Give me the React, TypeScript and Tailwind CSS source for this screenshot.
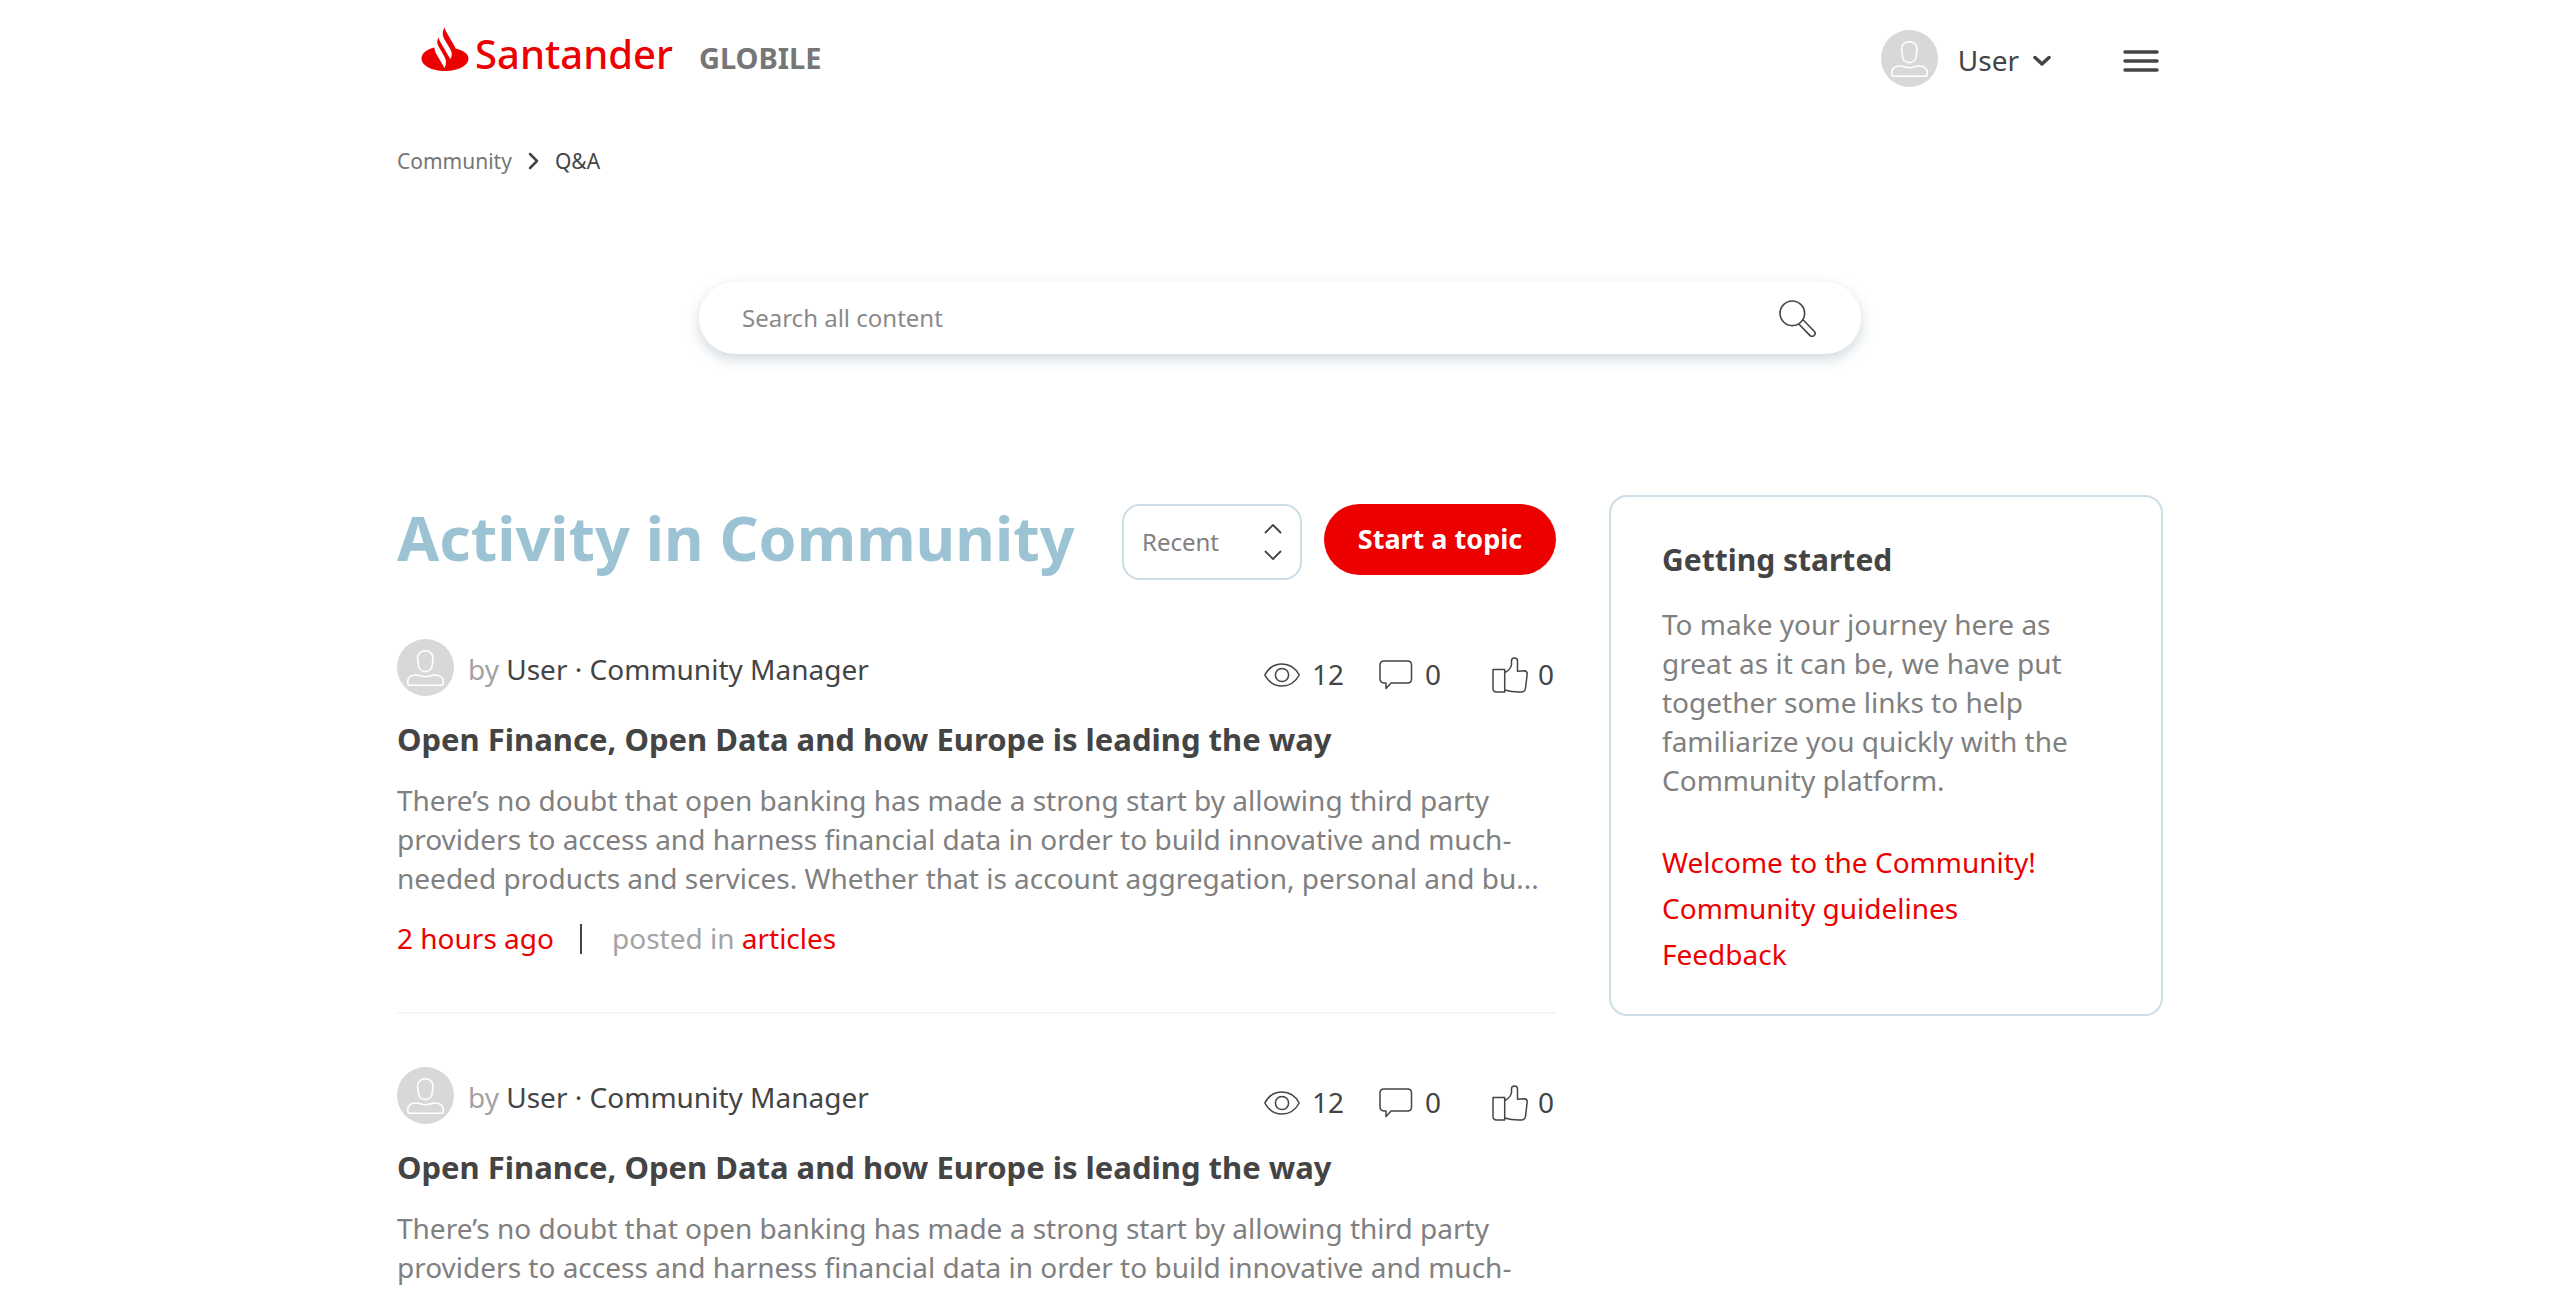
import { useState } from "react";
import { clsx } from "clsx";

type Topic = {
  id: number;
  author: string;
  role: string;
  title: string;
  excerpt: string;
  time: string;
  category: string;
  views: number;
  comments: number;
  likes: number;
};

const openFinance = {
  author: "User",
  role: "Community Manager",
  title: "Open Finance, Open Data and how Europe is leading the way",
  excerpt:
    "There’s no doubt that open banking has made a strong start by allowing third party providers to access and harness financial data in order to build innovative and much-needed products and services. Whether that is account aggregation, personal and bu...",
  time: "2 hours ago",
  category: "articles",
  views: 12,
  comments: 0,
  likes: 0,
};

const topics: Topic[] = [
  { id: 1, ...openFinance },
  { id: 2, ...openFinance },
];

const helpLinks = [
  "Welcome to the Community!",
  "Community guidelines",
  "Feedback",
];

function FlameLogo() {
  return (
    <svg viewBox="0 0 48 44" className="h-11 w-12 fill-[#ec0000]" aria-hidden>
      <path d="M34.5 21.5C42.5 23.2 47.5 27 47.5 31.5C47.5 38.5 37 44 24 44S.5 38.5.5 31.5C.5 26.5 5.5 22.3 13.5 20.5C13.6 23.2 14.2 25 15.4 27L21.5 37.5C22.4 39 23 40 23.3 41.2C25.6 37.2 25.6 33.3 23.3 29.4L17.5 19.3C15.8 16.3 15.9 13.2 17.6 10.3C17.8 12 18.3 13.3 19.2 14.8L27.5 29C28.4 30.5 29 31.2 29.3 32.2C31.4 28.6 31.3 25.8 29.3 22.3L23 11.4C21.1 7.8 21.3 3.8 23.7.3C23.9 2 24.3 3.2 25.2 4.8L33 18.2C33.8 19.5 34.3 20.3 34.5 21.5Z" />
    </svg>
  );
}

function Avatar() {
  return (
    <svg viewBox="0 0 57 57" className="size-[57px] shrink-0" aria-hidden>
      <circle cx="28.5" cy="28.5" r="28.5" fill="#d8d8d8" />
      <g fill="none" stroke="#fff" strokeWidth="1.6">
        <path d="M28.3 11.7C33 11.7 36.2 15 36 19.5L35.2 26C34.8 30 32.2 32.6 28.3 32.6S21.8 30 21.4 26L20.6 19.5C20.4 15 23.6 11.7 28.3 11.7Z" />
        <path d="M18.5 36C21.5 35.6 24.5 37.8 28.5 37.8S35.5 35.6 38.5 36C43.5 36.3 46.3 38.8 46.3 43V44C46.3 45.5 45.5 46.3 44 46.3H13C11.5 46.3 10.7 45.5 10.7 44V43C10.7 38.8 13.5 36.3 18.5 36Z" />
      </g>
    </svg>
  );
}

function EyeIcon() {
  return (
    <svg viewBox="0 0 36 24" className="h-6 w-9" fill="none" stroke="#444" strokeWidth="1.5" aria-hidden>
      <path d="M.8 12C4.5 5 10.5 1 18 1S31.5 5 35.2 12C31.5 19 25.5 23 18 23S4.500 19 .8 12Z" strokeLinejoin="round" />
      <circle cx="18" cy="12" r="6.6" />
    </svg>
  );
}

function CommentIcon() {
  return (
    <svg viewBox="0 0 34 30" className="h-[30px] w-[34px]" fill="none" stroke="#444" strokeWidth="1.5" aria-hidden>
      <path
        d="M5 1H28.5Q32.5 1 32.5 5V19Q32.5 23 28.5 23H12L7 28.5V23H5Q1 22.5 1 19V5Q1 1 5 1Z"
        strokeLinejoin="round"
      />
    </svg>
  );
}

function LikeIcon() {
  return (
    <svg viewBox="0 0 36 36" className="size-9" fill="none" stroke="#444" strokeWidth="1.5" strokeLinejoin="round" aria-hidden>
      <path d="M1 12.5H12.700V35H4.500Q1 34.8 1 31.5Z" />
      <path d="M12.7 15.5C16 14 19 10.5 19.5 7.5V4C19.5 2 20.8 1 22.5 1S25.5 2 25.5 4V14.2L32.5 13.7Q35.3 14 35.2 17L33.5 31.2C33 34 31.8 35 29.5 35C23 35.2 18 34.8 12.7 33" />
    </svg>
  );
}

function SearchIcon() {
  return (
    <svg viewBox="0 0 37 37" className="size-[37px]" fill="none" stroke="#444" strokeWidth="1.6" aria-hidden>
      <circle cx="13.3" cy="13.3" r="12.3" />
      <path d="M24 19.8L35.2 31.2A3 3 0 0 1 30.800 35.4L19.8 24" strokeLinejoin="round" />
    </svg>
  );
}

function Header() {
  return (
    <header className="flex items-center justify-between pt-[27px] pr-1 pl-6">
      <a href="#home" className="flex items-start gap-[6px] self-start">
        <FlameLogo />
        <span className="flex items-baseline gap-[26px]">
          <span className="text-[40px] leading-[54px] font-medium text-[#ec0000]">
            Santander
          </span>
          <span className="text-[29px] font-bold text-[#767676]">GLOBILE</span>
        </span>
      </a>

      <div className="flex h-[63px] items-center">
        <Avatar />
        <button type="button" className="ml-5 flex items-center gap-[14px] pt-1 text-[28px] leading-[39px]">
          User
          <svg viewBox="0 0 18 12" className="h-3 w-[18px]" fill="none" stroke="#444" strokeWidth="3.5" strokeLinecap="round" strokeLinejoin="round" aria-hidden>
            <path d="M2 2.500L9 9L16 2.500" />
          </svg>
        </button>
        <button type="button" aria-label="Open menu" className="ml-[72px] pt-1">
          <svg viewBox="0 0 36 22" className="h-[22px] w-9" stroke="#444" strokeWidth="3.5" strokeLinecap="round" aria-hidden>
            <path d="M2 2H34M2 11H34M2 20H34" />
          </svg>
        </button>
      </div>
    </header>
  );
}

function Breadcrumb() {
  return (
    <nav aria-label="Breadcrumb" className="mt-14 flex items-center gap-4 text-[21px] leading-[30px]">
      <a href="#community" className="text-[#767676]">
        Community
      </a>
      <svg viewBox="0 0 11 18" className="h-[18px] w-[11px]" fill="none" stroke="#444" strokeWidth="2.5" strokeLinecap="round" strokeLinejoin="round" aria-hidden>
        <path d="M2 2L9 9L2 16" />
      </svg>
      <span aria-current="page">Q&amp;A</span>
    </nav>
  );
}

function SearchBar() {
  return (
    <form
      role="search"
      onSubmit={(e) => e.preventDefault()}
      className="mx-auto mt-[106px] flex h-[72px] w-full max-w-[1162px] items-center rounded-full bg-white pr-[45px] pl-[43px] shadow-[0_5px_14px_rgba(110,135,155,0.32)]"
    >
      <input
        type="search"
        aria-label="Search all content"
        placeholder="Search all content"
        className="min-w-0 flex-1 text-2xl outline-none placeholder:text-[#8a8a8a]"
      />
      <button type="submit" aria-label="Search">
        <SearchIcon />
      </button>
    </form>
  );
}

function SortSelect() {
  const [sort, setSort] = useState("Recent");

  return (
    <div className="relative w-[180px] shrink-0">
      <select
        aria-label="Sort topics"
        value={sort}
        onChange={(e) => setSort(e.target.value)}
        className="h-[76px] w-full appearance-none rounded-[18px] border-2 border-[#cedee7] bg-white pl-[18px] text-2xl text-[#808080]"
      >
        <option>Recent</option>
        <option>Popular</option>
      </select>
      <svg viewBox="0 0 18 38" className="pointer-events-none absolute top-[19px] right-5 h-[38px] w-[18px]" fill="none" stroke="#444" strokeWidth="1.8" strokeLinecap="round" strokeLinejoin="round" aria-hidden>
        <path d="M1.5 9.5L9 2L16.5 9.5M1.5 28.5L9 36L16.5 28.5" />
      </svg>
    </div>
  );
}

function TopicCard({ topic, first }: { topic: Topic; first: boolean }) {
  return (
    <article
      className={clsx(
        "pb-[54px] text-[28px] leading-[39px]",
        !first && "border-t-2 border-[#f6f6f6] pt-[53px]",
      )}
    >
      <div className="flex items-center">
        <Avatar />
        <p className="ml-[14px] pt-1">
          <span className="text-[#a3a3a3]">by</span> {topic.author} · {topic.role}
        </p>
        <ul className="ml-auto flex items-center self-end pb-[2px]">
          <li className="mr-[35px] flex items-center gap-3" aria-label="Views">
            <EyeIcon />
            {topic.views}
          </li>
          <li className="mr-[51px] flex items-center gap-3" aria-label="Comments">
            <CommentIcon />
            {topic.comments}
          </li>
          <li className="mr-[2px] flex items-center gap-[10px]" aria-label="Likes">
            <LikeIcon />
            {topic.likes}
          </li>
        </ul>
      </div>
      <h2 className="mt-[22px] text-[31px] leading-[42px] font-bold">
        <a href="#topic">{topic.title}</a>
      </h2>
      <p className="mt-[21px] text-[#808080]">{topic.excerpt}</p>
      <div className="mt-[21px] flex items-center">
        <time className="text-[#ec0000]">{topic.time}</time>
        <span className="mr-[30px] ml-[26px] h-[30px] w-[2px] bg-[#444]" />
        <p className="text-[#a3a3a3]">
          posted in{" "}
          <a href="#articles" className="text-[#ec0000]">
            {topic.category}
          </a>
        </p>
      </div>
    </article>
  );
}

function GettingStarted() {
  return (
    <aside className="w-[554px] shrink-0 rounded-[18px] border-2 border-[#cedee7] px-[51px] pt-[42px] pb-[37px] text-[28px]">
      <h2 className="text-[30px] leading-[42px] font-bold">Getting started</h2>
      <p className="mt-6 leading-[39px] text-[#808080]">
        To make your journey here as great as it can be, we have put together
        some links to help familiarize you quickly with the Community platform.
      </p>
      <ul className="mt-[39px] leading-[46px] text-[#ec0000]">
        {helpLinks.map((label) => (
          <li key={label}>
            <a href="#help">{label}</a>
          </li>
        ))}
      </ul>
    </aside>
  );
}

export default function App() {
  return (
    <div className="min-h-screen bg-white font-['Noto_Sans','Open_Sans',sans-serif] text-[#444]">
      <div className="mx-auto max-w-[1766px]">
        <Header />
        <Breadcrumb />
        <SearchBar />
        <div className="mt-[141px] flex items-start gap-[53px]">
          <main className="min-w-0 flex-1 pt-[9px]">
            <div className="mb-[59px] flex items-start gap-[22px]">
              <h1 className="flex-1 text-[61px] leading-[68px] font-bold text-[#9bc3d3]">
                Activity in Community
              </h1>
              <SortSelect />
              <button
                type="button"
                className="h-[71px] w-[232px] shrink-0 rounded-full bg-[#ec0000] text-[27px] font-bold text-white"
              >
                Start a topic
              </button>
            </div>
            {topics.map((topic, i) => (
              <TopicCard key={topic.id} topic={topic} first={i === 0} />
            ))}
          </main>
          <GettingStarted />
        </div>
      </div>
    </div>
  );
}
